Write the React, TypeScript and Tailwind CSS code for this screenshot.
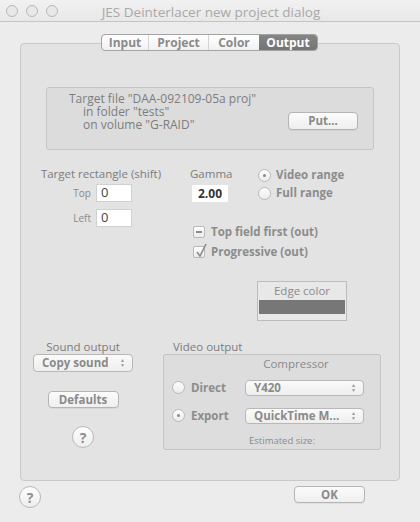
import React from "react";

const font = { fontFamily: '"Open Sans", "Lucida Grande", sans-serif' };

function Btn({ label, className }: { label: string; className: string }) {
  return (
    <div
      className={`flex items-center justify-center rounded-[4px] border border-[#b4b4b4] bg-gradient-to-b from-[#fbfbfb] to-[#efefef] text-[11.5px] font-bold text-[#8a8a8a] shadow-[0_1px_0_rgba(0,0,0,0.05)] ${className}`}
    >
      {label}
    </div>
  );
}

function Popup({ label, className }: { label: string; className: string }) {
  return (
    <div
      className={`flex items-center justify-between rounded-[4px] border border-[#b8b8b8] bg-gradient-to-b from-[#fafafa] to-[#eeeeee] pl-[8px] pr-[7px] text-[11.5px] font-bold text-[#8a8a8a] ${className}`}
    >
      <span className="truncate">{label}</span>
      <span className="flex flex-col items-center text-[5px] leading-[5px] text-[#9a9a9a]">
        <span>▲</span>
        <span>▼</span>
      </span>
    </div>
  );
}

function Radio({ on }: { on?: boolean }) {
  return (
    <div className="flex h-[13px] w-[13px] shrink-0 items-center justify-center rounded-full border border-[#b9b9b9] bg-gradient-to-b from-[#fdfdfd] to-[#ececec]">
      {on && <div className="h-[3px] w-[3px] rounded-full bg-[#8a8a8a]" />}
    </div>
  );
}

function Help({ className }: { className: string }) {
  return (
    <div
      className={`flex h-[22px] w-[22px] items-center justify-center rounded-full border border-[#b9b9b9] bg-gradient-to-b from-[#fdfdfd] to-[#eeeeee] text-[14px] font-bold text-[#8e8e8e] ${className}`}
    >
      ?
    </div>
  );
}

export default function App() {
  return (
    <div className="h-[522px] w-[420px] overflow-hidden bg-[#ececec]" style={font}>
      {/* title bar */}
      <div className="relative flex h-[22px] items-center border-b border-[#c4c4c4] bg-gradient-to-b from-[#f1f1f1] to-[#e8e8e8]">
        <div className="ml-[6px] flex gap-[8px]">
          <div className="h-[12px] w-[12px] rounded-full border border-[#b8b8b8] bg-[#e8e8e8]" />
          <div className="h-[12px] w-[12px] rounded-full border border-[#b8b8b8] bg-[#e8e8e8]" />
          <div className="h-[12px] w-[12px] rounded-full border border-[#b8b8b8] bg-[#e8e8e8]" />
        </div>
        <div className="absolute inset-x-0 top-[2px] pl-[2px] text-center text-[13.5px] text-[#a8a8a8]">
          JES Deinterlacer new project dialog
        </div>
      </div>

      {/* tab group */}
      <div className="relative ml-[20px] mt-[21px] h-[438px] w-[380px] rounded-[4px] border border-[#c9c9c9] bg-[#e3e3e3]">
        <div className="absolute left-[80px] top-[-10px] flex h-[17px] overflow-hidden rounded-[4px] border border-[#a3a3a3] bg-gradient-to-b from-[#ffffff] to-[#f1f1f1] text-[12px] font-bold leading-none text-[#8a8a8a]">
          <div className="flex w-[47px] items-center justify-center border-r border-[#d4d4d4]">Input</div>
          <div className="flex w-[60px] items-center justify-center border-r border-[#d4d4d4]">Project</div>
          <div className="flex w-[50px] items-center justify-center">Color</div>
          <div className="flex w-[58px] items-center justify-center bg-gradient-to-b from-[#858585] to-[#747474] text-white">Output</div>
        </div>

        {/* target file box */}
        <div className="ml-[25px] mt-[43px] flex h-[63px] w-[328px] items-start rounded-[3px] border border-[#c6c6c6] bg-[#dcdcdc]">
          <div className="ml-[22px] mt-[4px] text-[12px] leading-[13px] text-[#7c7c7c]">
            <div>Target file "DAA-092109-05a proj"</div>
            <div className="pl-[14px]">in folder "tests"</div>
            <div className="pl-[14px]">on volume "G-RAID"</div>
          </div>
          <Btn label="Put..." className="ml-auto mr-[15px] mt-[24px] h-[18px] w-[70px]" />
        </div>

        {/* options */}
        <div className="mt-[16px] flex">
          <div className="ml-[19px] w-[122px]">
            <div className="h-[16px] whitespace-nowrap text-center text-[11.5px] leading-[16px] text-[#7c7c7c]">Target rectangle (shift)</div>
            <div className="mt-[2px] flex items-center">
              <div className="w-[56px] pr-[5px] text-right text-[10px] text-[#8a8a8a]">Top</div>
              <div className="flex h-[18px] w-[36px] items-center border border-[#d0d0d0] bg-white pl-[4px] text-[13px] text-[#444]">0</div>
            </div>
            <div className="mt-[7px] flex items-center">
              <div className="w-[56px] pr-[5px] text-right text-[10px] text-[#8a8a8a]">Left</div>
              <div className="flex h-[18px] w-[36px] items-center border border-[#d0d0d0] bg-white pl-[4px] text-[13px] text-[#444]">0</div>
            </div>
          </div>

          <div className="ml-[28px]">
            <div className="flex">
              <div className="w-[42px]">
                <div className="h-[16px] text-[11.5px] leading-[16px] text-[#7c7c7c]">Gamma</div>
                <div className="ml-[2px] mt-[3px] flex h-[17px] w-[36px] items-center justify-center bg-white text-[12px] font-bold text-[#333]">2.00</div>
              </div>
              <div className="ml-[26px] text-[11.5px] font-bold text-[#8c8c8c]">
                <div className="flex h-[18px] items-center gap-[5px]">
                  <Radio on />
                  <span>Video range</span>
                </div>
                <div className="flex h-[18px] items-center gap-[5px]">
                  <Radio />
                  <span>Full range</span>
                </div>
              </div>
            </div>

            <div className="ml-[3px] mt-[20px] text-[11.5px] font-bold text-[#8c8c8c]">
              <div className="flex h-[20px] items-center gap-[6px]">
                <div className="flex h-[12px] w-[12px] items-center justify-center rounded-[2px] border border-[#b9b9b9] bg-gradient-to-b from-[#fdfdfd] to-[#ececec]">
                  <div className="h-[2px] w-[6px] bg-[#8a8a8a]" />
                </div>
                <span>Top field first (out)</span>
              </div>
              <div className="flex h-[20px] items-center gap-[6px]">
                <div className="relative h-[12px] w-[12px] rounded-[2px] border border-[#b9b9b9] bg-gradient-to-b from-[#fdfdfd] to-[#ececec]">
                  <svg className="absolute left-[1px] top-[-4px]" width="13" height="15" viewBox="0 0 13 15">
                    <path d="M2 9 L5 13 L11 1" fill="none" stroke="#8a8a8a" strokeWidth="1.6" />
                  </svg>
                </div>
                <span>Progressive (out)</span>
              </div>
            </div>

            <div className="ml-[67px] mt-[19px] h-[40px] w-[90px] border border-[#bcbcbc] bg-[#e8e8e8] px-[1px]">
              <div className="h-[18px] text-center text-[11.5px] leading-[18px] text-[#8a8a8a]">Edge color</div>
              <div className="h-[14px] bg-[#777777]" />
            </div>
          </div>
        </div>

        {/* sound / video */}
        <div className="mt-[18px] flex">
          <div className="ml-[12px] flex w-[100px] flex-col items-center">
            <div className="h-[15px] text-[11.5px] leading-[15px] text-[#7c7c7c]">Sound output</div>
            <Popup label="Copy sound" className="h-[18px] w-[100px]" />
            <Btn label="Defaults" className="mt-[19px] h-[17px] w-[71px]" />
            <Help className="mt-[18px]" />
          </div>

          <div className="ml-[30px] w-[218px]">
            <div className="h-[15px] pl-[10px] text-[11.5px] leading-[15px] text-[#7c7c7c]">Video output</div>
            <div className="h-[96px] rounded-[3px] border border-[#c4c4c4] bg-[#dddddd]">
              <div className="ml-[80px] mt-[1px] w-[104px] text-center text-[11.5px] leading-[16px] text-[#8a8a8a]">Compressor</div>
              <div className="mt-[7px] flex items-center text-[11.5px] font-bold text-[#8c8c8c]">
                <div className="ml-[8px]"><Radio /></div>
                <span className="ml-[6px] w-[54px]">Direct</span>
                <Popup label="Y420" className="h-[16px] w-[119px]" />
              </div>
              <div className="mt-[11px] flex items-center text-[11.5px] font-bold text-[#8c8c8c]">
                <div className="ml-[8px]"><Radio on /></div>
                <span className="ml-[6px] w-[54px]">Export</span>
                <Popup label="QuickTime M..." className="h-[16px] w-[119px]" />
              </div>
              <div className="ml-[68px] mt-[10px] w-[100px] text-center text-[9.5px] leading-[12px] text-[#8a8a8a]">Estimated size:</div>
            </div>
          </div>
        </div>
      </div>

      {/* bottom */}
      <div className="mt-[5px] flex items-start">
        <Help className="ml-[19px]" />
        <Btn label="OK" className="ml-[253px] h-[17px] w-[71px]" />
      </div>
    </div>
  );
}
